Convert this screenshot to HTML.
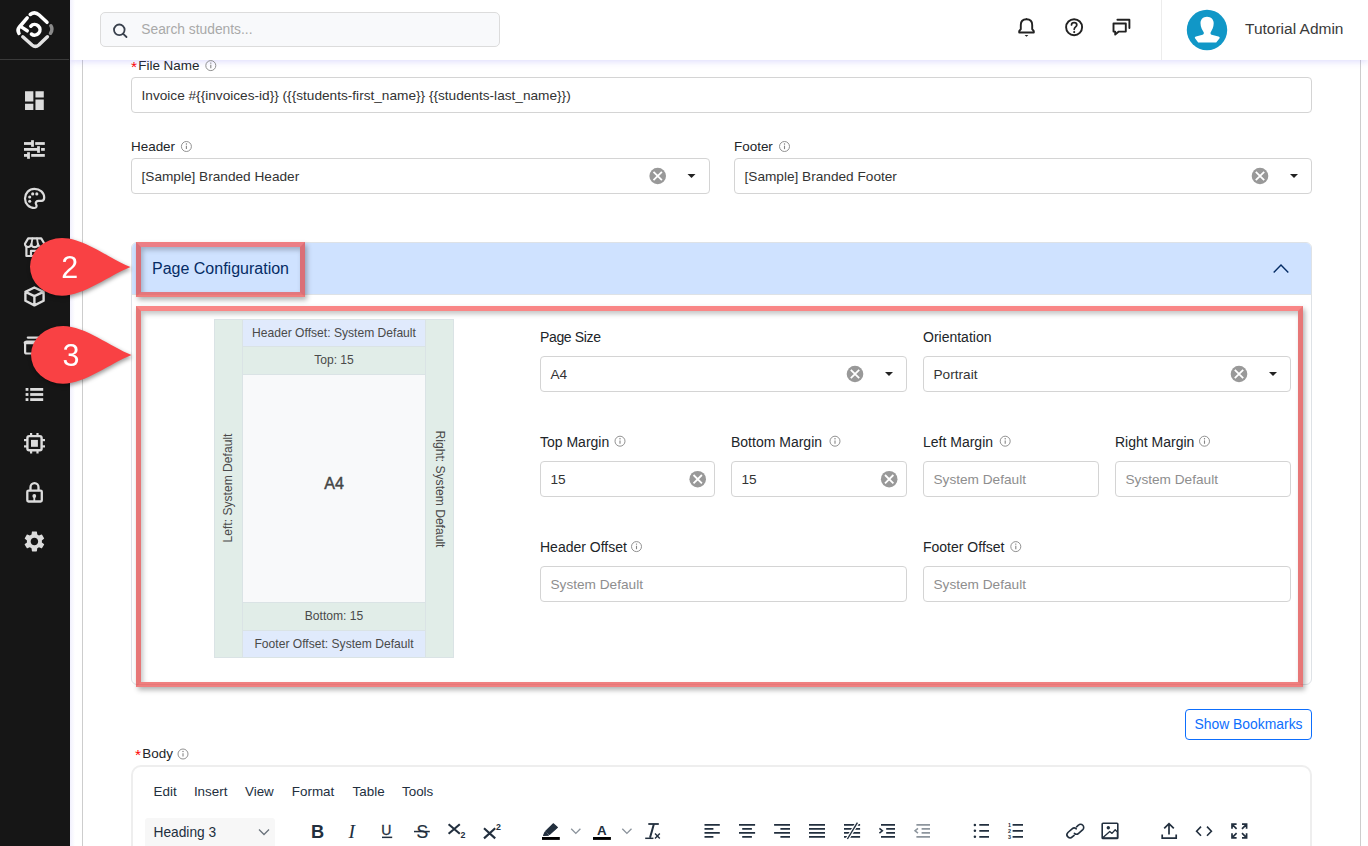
<!DOCTYPE html>
<html lang="en">
<head>
<meta charset="utf-8">
<title>Page Configuration</title>
<style>
*{box-sizing:border-box;margin:0;padding:0}
html,body{width:1368px;height:846px;overflow:hidden;background:#fff}
body{font-family:"Liberation Sans",sans-serif;color:#212529;position:relative;font-size:14px}
.abs{position:absolute}
/* sidebar */
#side{position:absolute;left:0;top:0;width:70px;height:846px;background:#161616;z-index:5}
#side .sep{position:absolute;left:0;top:59px;width:69px;height:1px;background:#3a3a3a}
#side svg.ic{position:absolute;left:21.5px;width:26px;height:26px;fill:#dcdcdc}
/* topbar */
#top{position:absolute;left:70px;top:0;width:1298px;height:60px;background:#fff;z-index:4;box-shadow:0 2px 6px rgba(120,110,240,.22)}
#search{position:absolute;left:30px;top:12px;width:400px;height:35px;background:#f8f9fb;border:1px solid #dcdcdc;border-radius:5px}
#search span{position:absolute;left:40.3px;top:9px;font-size:13.8px;color:#a9a9a9;white-space:nowrap}
#top .vsep{position:absolute;left:1091px;top:0;width:1px;height:60px;background:#ececec}
#uname{position:absolute;left:1175px;top:20px;font-size:15.5px;color:#3a3a3a;white-space:nowrap}
/* page */
#card{position:absolute;left:82px;top:-20px;width:1279px;height:900px;border:1px solid #cdcdcd;background:#fff;z-index:1}
#shade{position:absolute;left:70px;top:0;width:5px;height:846px;background:linear-gradient(90deg,rgba(120,110,240,.10),rgba(120,110,240,0));z-index:5}
.lbl{position:absolute;font-size:13.45px;color:#212529;white-space:nowrap;z-index:3;line-height:18px}
.lbl .req{color:#f00;margin-right:1.2px;font-size:15.5px;position:relative;top:1.5px;line-height:10px}
.inp{position:absolute;height:36px;border:1px solid #d4d4d4;border-radius:4px;background:#fff;z-index:3}
.inp span{position:absolute;left:9.5px;top:9.5px;font-size:13.65px;color:#333;white-space:nowrap;line-height:16px}
.inp span.ph{color:#8e8e8e}
.info{position:absolute;width:11px;height:11px;z-index:3}
.clr{position:absolute;width:17px;height:17px;z-index:4}
.caret{position:absolute;width:0;height:0;border-left:4px solid transparent;border-right:4px solid transparent;border-top:4px solid #222;z-index:4}
.lbl.r{font-size:14px}
#acc{position:absolute;left:131px;top:242px;width:1181px;height:443px;border:1px solid #dee2e6;border-radius:6px;background:#fff;z-index:2;overflow:hidden}
#acchead{position:absolute;left:-1px;top:-1px;width:1181px;height:53px;background:#cfe2ff;border-bottom:1px solid #dee2e6}
#acchead span{position:absolute;left:21px;top:17px;font-size:16px;color:#052c65;white-space:nowrap;line-height:20px}
#acchead .chev{position:absolute;left:1142px;top:22px}
#pv{position:absolute;left:214px;top:319px;width:240px;height:339px;background:#dae3e5;z-index:3;font-size:12.1px;color:#4a4a4a}
#pv .pvl,#pv .pvr{position:absolute;top:1px;width:27px;height:337px;background:#e1ede8}
#pv .pvl{left:1px}#pv .pvr{left:212px}
#pv .pvl span{position:absolute;left:13px;top:168px;white-space:nowrap;transform:translate(-50%,-50%) rotate(-90deg)}
#pv .pvr span{position:absolute;left:14px;top:168.500px;white-space:nowrap;transform:translate(-50%,-50%) rotate(90deg)}
#pv .pvrow{position:absolute;left:29px;width:182px;text-align:center;white-space:nowrap;display:flex;align-items:center;justify-content:center}
#pv .ho{background:#e0eafc}
#pv .tm{background:#e1ede8;padding-bottom:2px}
#pv .pvc{position:absolute;left:29px;top:56px;width:182px;height:227px;background:#f8f9fa}
#pv .pvc span{position:absolute;left:0;width:182px;text-align:center;top:99px;line-height:20px;font-size:16px;font-weight:normal;-webkit-text-stroke:0.45px #454545;color:#454545}
#bm{position:absolute;left:1185px;top:709px;width:127px;height:31px;border:1px solid #0d6efd;border-radius:4px;color:#0d6efd;font-size:13.9px;text-align:center;line-height:29px;z-index:3;background:#fff;white-space:nowrap}
#ed{position:absolute;left:131px;top:765px;width:1181px;height:120px;border:2px solid #eee;border-radius:10px;background:#fff;z-index:3}
#ed .menu span{position:absolute;top:15.5px;font-size:13.4px;color:#222f3e;white-space:nowrap;line-height:18px}
#hsel{position:absolute;left:12px;top:51px;width:130px;height:34px;background:#f7f7f7;border-radius:3px}
#hsel span{position:absolute;left:8.500px;top:5.500px;font-size:13.750px;color:#222f3e;white-space:nowrap;line-height:18px}
.hl{position:absolute;border:5px solid;border-color:rgba(247,88,88,.72) rgba(223,68,68,.72) rgba(234,79,79,.72) rgba(223,68,68,.72);box-shadow:2px 3px 5px rgba(0,0,0,.3), inset 2px 3px 5px rgba(0,0,0,.23);z-index:6}
.mk{position:absolute;z-index:7;filter:drop-shadow(1px 2px 2px rgba(0,0,0,.4));overflow:visible}
</style>
</head>
<body>
<div id="side">
  <div class="sep"></div>
  <svg class="abs" style="left:0;top:0" width="70" height="846" viewBox="0 0 70 846">
    <g fill="none" stroke-width="3.5" stroke-linecap="round" stroke-linejoin="round">
      <path d="M30.200 14.500 Q34.800 11 39.200 15 L47 22.300" stroke="#fff"/>
      <path d="M27.2 17.800 L19.4 27 Q16.800 30.200 19 33.400" stroke="#fff"/>
      <path d="M22 27.400 L27.2 30.800" stroke="#fff"/>
      <path d="M30.800 26.200 A5.300 5.300 0 1 1 31.400 34" stroke="#fff"/>
      <path d="M50.900 25.800 Q53.200 29.400 50.500 33.200" stroke="#8a8a8a"/>
      <path d="M22.800 36.800 L32 45 Q35.400 47.800 38.800 45 L47.400 36.800" stroke="#e2e2e2"/>
    </g>
    <g fill="#dcdcdc">
      <!-- dashboard -->
      <path transform="translate(21.9 88) scale(1.0417)" d="M3 13h8V3H3v10zm0 8h8v-6H3v6zm10 0h8V11h-8v10zm0-18v6h8V3h-8z"/>
      <!-- tune -->
      <rect x="24" y="142.100" width="9" height="2.800"/><rect x="31.100" y="140.200" width="2.800" height="6.600"/><rect x="35.200" y="142.100" width="9.600" height="2.800"/>
      <rect x="24" y="148" width="15" height="2.800"/><rect x="37.100" y="146.200" width="2.800" height="6.600"/><rect x="41.100" y="148" width="3.700" height="2.800"/>
      <rect x="24" y="154" width="5" height="2.800"/><rect x="27.100" y="152.200" width="2.800" height="6.600"/><rect x="31.200" y="154" width="13.600" height="2.800"/>
      <!-- palette dots -->
      <circle cx="32.700" cy="193.900" r="1.550"/><circle cx="36.800" cy="193.900" r="1.550"/><circle cx="29.700" cy="197" r="1.550"/><circle cx="29.700" cy="201.200" r="1.550"/>
      <!-- list -->
      <rect x="25.600" y="388" width="2.800" height="2.800"/><rect x="30.200" y="388" width="13" height="2.800"/>
      <rect x="25.600" y="393.100" width="2.800" height="2.800"/><rect x="30.200" y="393.100" width="13" height="2.800"/>
      <rect x="25.600" y="398.200" width="2.800" height="2.800"/><rect x="30.200" y="398.200" width="13" height="2.800"/>
      <!-- chip inner + pins -->
      <rect x="31" y="439.900" width="6.900" height="6.900"/>
      <rect x="30" y="433" width="2.200" height="3"/><rect x="36.400" y="433" width="2.200" height="3"/>
      <rect x="30" y="450.500" width="2.200" height="3"/><rect x="36.400" y="450.500" width="2.200" height="3"/>
      <rect x="24" y="439" width="3" height="2.200"/><rect x="24" y="445.300" width="3" height="2.200"/>
      <rect x="42" y="439" width="3" height="2.200"/><rect x="42" y="445.300" width="3" height="2.200"/>
      <!-- lock keyhole -->
      <circle cx="34.300" cy="496" r="1.900"/><rect x="33.400" y="496" width="1.800" height="5.500"/>
      <!-- gear -->
      <path transform="translate(21.900 528.900) scale(1.0417)" d="M19.140 12.940c.04-.3.060-.610.060-.940 0-.320-.020-.640-.070-.940l2.030-1.580a.49.49 0 0 0 .120-.610l-1.920-3.320a.488.488 0 0 0-.590-.220l-2.390.960c-.5-.380-1.030-.7-1.620-.940l-.36-2.540a.484.484 0 0 0-.480-.410h-3.840c-.240 0-.430.170-.470.410l-.36 2.540c-.590.240-1.130.570-1.620.940l-2.390-.960c-.220-.080-.470 0-.590.220L2.740 8.870c-.120.210-.080.470.120.610l2.030 1.580c-.05.3-.09.630-.09.940s.02.640.07.940l-2.030 1.580a.49.49 0 0 0-.120.610l1.920 3.320c.120.220.370.290.590.220l2.390-.960c.5.380 1.030.7 1.620.940l.36 2.540c.05.240.240.410.480.410h3.840c.240 0 .440-.170.470-.410l.36-2.540c.590-.240 1.130-.560 1.620-.940l2.390.960c.220.080.470 0 .590-.220l1.920-3.320c.120-.220.070-.470-.120-.610l-2.010-1.580zM12 15.600c-1.980 0-3.600-1.620-3.600-3.600s1.620-3.600 3.600-3.600 3.600 1.620 3.600 3.600-1.620 3.600-3.600 3.600z"/>
    </g>
    <g fill="none" stroke="#dcdcdc" stroke-width="2.200" stroke-linejoin="round" stroke-linecap="round">
      <!-- palette -->
      <path d="M34.400 188.800 C40 188.800 44.200 192.800 44.200 197.600 C44.200 199.800 43.200 200.900 41.400 200.900 L38.800 200.900 C36.400 200.900 35 202.600 36.100 204.400 C37.200 206.200 36.400 208 34.400 208 C29.200 208 25 203.700 25 198.400 C25 193.100 29.200 188.800 34.400 188.800 Z"/>
      <!-- store --><g transform="translate(0.2 0.5)">
      <path d="M28 237.900 L41 237.900 L44.200 243.300 A3.200 3 0 0 1 37.800 243.700 A3.300 3 0 0 1 31.200 243.700 A3.200 3 0 0 1 24.800 243.300 Z"/>
      <path d="M31.300 243.500 L32.200 238 M37.700 243.500 L36.800 238" stroke-width="1.800"/>
      <path d="M26.200 246.600 V255.500 H43 V246.600"/>
      <path d="M30.800 255.500 V250.400 H37.600 V255.500"/></g>
      <!-- cube -->
      <path stroke-width="2.400" d="M34.400 287.500 L43.600 291.900 V300.700 L34.400 305.400 L25.400 300.700 V291.900 Z M25.400 291.900 L34.400 296.200 L43.600 291.900 M34.400 296.200 V305.400"/>
      <!-- card -->
      <path d="M27.800 337.600 H42"/>
      <rect x="25.100" y="341.500" width="19" height="12" rx="1.500"/>
      <path d="M25.100 342.800 H44" stroke-width="3"/>
      <!-- chip -->
      <rect x="27.400" y="436.100" width="14.200" height="14.200" rx="1.800" stroke-width="2.400"/>
      <!-- lock -->
      <rect x="27.300" y="490.600" width="14.500" height="10.900" rx="1.200" stroke-width="2.300"/>
      <path d="M30.500 490 V487.200 A4 4 0 0 1 38.500 487.200 V490" stroke-width="2.300"/>
    </g>
  </svg>
</div>
<div id="top">
  <div id="search"><span>Search students...</span></div>
  <div class="vsep"></div>
  <svg class="abs" style="left:0;top:0" width="1298" height="60" viewBox="70 0 1298 60">
    <g fill="none" stroke="#39414d" stroke-width="1.800" stroke-linecap="round">
      <circle cx="119.300" cy="29.800" r="5.300"/><path d="M123.200 33.800 L126.500 37"/>
    </g>
    <g fill="none" stroke="#222" stroke-width="1.900" stroke-linejoin="round" stroke-linecap="round">
      <!-- bell -->
      <path d="M1019.200 32.500 H1033.800 V31.200 L1032.200 29.200 V25 C1032.200 21.400 1029.800 19.300 1026.500 19.300 C1023.200 19.300 1020.800 21.400 1020.800 25 V29.200 L1019.200 31.200 Z"/>
      <!-- help -->
      <circle cx="1074.100" cy="27.200" r="8"/>
      <path d="M1071.500 25 C1071.500 21.900 1076.800 21.900 1076.800 25 C1076.800 26.900 1074.200 27 1074.200 29.300" stroke-width="1.700"/>
      <!-- chat -->
      <path d="M1113.500 23.500 H1125.800 V31.600 H1118.800 L1115.200 34.600 V31.600 H1113.500 Z"/>
      <path d="M1117.400 19.700 H1129.400 V28"/>
    </g>
    <path d="M1024.600 35 H1028.400 L1026.500 36.700 Z M1025.700 18.900 L1026.500 18 L1027.300 18.900Z" fill="#222"/>
    <circle cx="1074.200" cy="32.100" r="1.050" fill="#222"/>
    <circle cx="1207" cy="30" r="20.200" fill="#1197c7"/>
    <path fill="#fff" d="M1207 16.800 C1203 16.800 1200.500 19.600 1200.500 23.200 C1200.500 27 1202.400 30 1203.800 32.400 C1204.200 33.800 1203 34.600 1201.600 35 L1196 36.400 C1195 36.800 1194.600 37.600 1195 38.200 L1198.200 42.600 L1216.200 42.600 L1219.600 38.200 C1220 37.400 1219.400 36.800 1218.400 36.400 L1212.600 35 C1211 34.600 1210.200 33.800 1210.600 32.400 C1212 30 1213.700 27 1213.700 23.200 C1213.700 19.600 1211 16.800 1207 16.800Z"/>
  </svg>
  <div id="uname">Tutorial Admin</div>
</div>
<div id="shade"></div>
<div id="card"></div>
<!-- top form -->
<div class="lbl" style="left:131px;top:57px"><span class="req">*</span>File Name</div>
<div class="inp" style="left:131px;top:77px;width:1181px"><span>Invoice #{{invoices-id}} ({{students-first_name}} {{students-last_name}})</span></div>
<div class="lbl" style="left:131px;top:138px">Header</div>
<div class="inp" style="left:131px;top:158px;width:579px"><span>[Sample] Branded Header</span></div>
<div class="lbl" style="left:734px;top:138px">Footer</div>
<div class="inp" style="left:734px;top:158px;width:578px"><span>[Sample] Branded Footer</span></div>

<!-- accordion -->
<div id="acc">
  <div id="acchead"><span>Page Configuration</span>
    <svg class="chev" viewBox="0 0 16 9" width="16" height="9"><path d="M0.7 8.5 L8 1 L15.3 8.5" fill="none" stroke="#052c65" stroke-width="1.4"/></svg>
  </div>
</div>

<!-- preview -->
<div id="pv">
  <div class="pvl"><span>Left: System Default</span></div>
  <div class="pvr"><span>Right: System Default</span></div>
  <div class="pvrow ho" style="top:1px;height:26px">Header Offset: System Default</div>
  <div class="pvrow tm" style="top:28px;height:27px">Top: 15</div>
  <div class="pvc"><span>A4</span></div>
  <div class="pvrow tm" style="top:284px;height:27px">Bottom: 15</div>
  <div class="pvrow ho" style="top:312px;height:26px">Footer Offset: System Default</div>
</div>

<!-- config form -->
<div class="lbl r" style="left:540px;top:328px;letter-spacing:-0.35px">Page Size</div>
<div class="inp" style="left:540px;top:356px;width:367px"><span>A4</span></div>
<div class="lbl r" style="left:923px;top:328px">Orientation</div>
<div class="inp" style="left:923px;top:356px;width:368px"><span>Portrait</span></div>

<div class="lbl r" style="left:540px;top:433px">Top Margin</div>
<div class="inp" style="left:540px;top:461px;width:175px"><span>15</span></div>
<div class="lbl r" style="left:731px;top:433px">Bottom Margin</div>
<div class="inp" style="left:731px;top:461px;width:176px"><span>15</span></div>
<div class="lbl r" style="left:923px;top:433px">Left Margin</div>
<div class="inp" style="left:923px;top:461px;width:176px"><span class="ph">System Default</span></div>
<div class="lbl r" style="left:1115px;top:433px">Right Margin</div>
<div class="inp" style="left:1115px;top:461px;width:176px"><span class="ph">System Default</span></div>

<div class="lbl r" style="left:540px;top:538px">Header Offset</div>
<div class="inp" style="left:540px;top:566px;width:367px"><span class="ph">System Default</span></div>
<div class="lbl r" style="left:923px;top:538px">Footer Offset</div>
<div class="inp" style="left:923px;top:566px;width:368px"><span class="ph">System Default</span></div>

<!-- bookmarks + body -->
<div id="bm">Show Bookmarks</div>
<div class="lbl" style="left:135px;top:745px"><span class="req">*</span>Body</div>
<div id="ed">
  <div class="menu">
    <span style="left:20.600px">Edit</span><span style="left:60.900px">Insert</span><span style="left:112px">View</span><span style="left:158.800px">Format</span><span style="left:219.600px">Table</span><span style="left:269px">Tools</span>
  </div>
  <div id="hsel"><span>Heading 3</span>
    <svg viewBox="0 0 12 8" width="12" height="8" style="position:absolute;left:112.500px;top:10px"><path d="M1 1.5 L6 6.5 L11 1.5" fill="none" stroke="#6b737c" stroke-width="1.3"/></svg>
  </div>
</div>

<!-- highlights -->
<div class="hl" style="left:136px;top:242px;width:169px;height:55px"></div>
<div class="hl" style="left:136px;top:306px;width:1167px;height:381px"></div>
<svg class="mk" style="left:20px;top:227px" width="130" height="80" viewBox="20 227 130 80"><path d="M130.500 267 C110 259 84 238 62 238 A32 28.850 0 0 0 62 295.700 C84 295.700 110 275 130.500 267Z" fill="#f94144"/><text x="69.800" y="278.200" text-anchor="middle" font-size="30.500" fill="#fff" font-family="Liberation Sans, sans-serif">2</text></svg>
<svg class="mk" style="left:21px;top:315px" width="130" height="80" viewBox="20 227 130 80"><path d="M130.500 267 C110 259 84 238 62 238 A32 28.850 0 0 0 62 295.700 C84 295.700 110 275 130.500 267Z" fill="#f94144"/><text x="69.900" y="277.600" text-anchor="middle" font-size="30.500" fill="#fff" font-family="Liberation Sans, sans-serif">3</text></svg>

<svg class="abs" style="left:0;top:0;z-index:4" width="1368" height="846" viewBox="0 0 1368 846">
<g fill="none" stroke="#858585" stroke-width="0.9">
<circle cx="210.8" cy="65.6" r="5"/><path d="M210.8 64.8 V68.19999999999999" stroke-width="1.1"/>
<circle cx="186.4" cy="146.5" r="5"/><path d="M186.4 145.7 V149.1" stroke-width="1.1"/>
<circle cx="784.5" cy="146.5" r="5"/><path d="M784.5 145.7 V149.1" stroke-width="1.1"/>
<circle cx="620" cy="441.2" r="5"/><path d="M620 440.4 V443.8" stroke-width="1.1"/>
<circle cx="835" cy="441.2" r="5"/><path d="M835 440.4 V443.8" stroke-width="1.1"/>
<circle cx="636.5" cy="546.6" r="5"/><path d="M636.5 545.8000000000001 V549.2" stroke-width="1.1"/>
<circle cx="1005.2" cy="441.2" r="5"/><path d="M1005.2 440.4 V443.8" stroke-width="1.1"/>
<circle cx="1204.5" cy="441.2" r="5"/><path d="M1204.5 440.4 V443.8" stroke-width="1.1"/>
<circle cx="1015.8" cy="546.6" r="5"/><path d="M1015.8 545.8000000000001 V549.2" stroke-width="1.1"/>
<circle cx="183" cy="754" r="5"/><path d="M183 753.2 V756.6" stroke-width="1.1"/>
</g><g fill="#7d7d7d">
<circle cx="210.8" cy="63.099999999999994" r="0.7"/>
<circle cx="186.4" cy="144.0" r="0.7"/>
<circle cx="784.5" cy="144.0" r="0.7"/>
<circle cx="620" cy="438.7" r="0.7"/>
<circle cx="835" cy="438.7" r="0.7"/>
<circle cx="636.5" cy="544.1" r="0.7"/>
<circle cx="1005.2" cy="438.7" r="0.7"/>
<circle cx="1204.5" cy="438.7" r="0.7"/>
<circle cx="1015.8" cy="544.1" r="0.7"/>
<circle cx="183" cy="751.5" r="0.7"/>
</g><g fill="#999">
<circle cx="657.7" cy="176" r="8.3"/>
<circle cx="1260" cy="176" r="8.3"/>
<circle cx="855" cy="374" r="8.3"/>
<circle cx="1239" cy="374" r="8.3"/>
<circle cx="697.7" cy="479.2" r="8.3"/>
<circle cx="889.2" cy="479.2" r="8.3"/>
</g><g stroke="#fff" stroke-width="1.8" fill="none">
<path d="M653.5 171.8 L661.9000000000001 180.2 M661.9000000000001 171.8 L653.5 180.2"/>
<path d="M1255.8 171.8 L1264.2 180.2 M1264.2 171.8 L1255.8 180.2"/>
<path d="M850.8 369.8 L859.2 378.2 M859.2 369.8 L850.8 378.2"/>
<path d="M1234.8 369.8 L1243.2 378.2 M1243.2 369.8 L1234.8 378.2"/>
<path d="M693.5 475.0 L701.9000000000001 483.4 M701.9000000000001 475.0 L693.5 483.4"/>
<path d="M885.0 475.0 L893.4000000000001 483.4 M893.4000000000001 475.0 L885.0 483.4"/>
</g><g fill="#222">
<path d="M687.5 174 H695.5 L691.5 178 Z"/>
<path d="M1290 174 H1298 L1294 178 Z"/>
<path d="M885 372 H893 L889 376 Z"/>
<path d="M1269 372 H1277 L1273 376 Z"/>
</g></svg>
<svg class="abs" style="left:0;top:800px;z-index:4" width="1368" height="46" viewBox="0 800 1368 46" font-family="Liberation Sans, sans-serif">
<text x="311" y="837.8" font-size="18.2" font-weight="bold" fill="#222f3e">B</text>
<text x="348.600" y="837.8" style="font-family:'Liberation Serif',serif;font-style:italic;font-size:19.5px" fill="#222f3e">I</text>
<text x="381.2" y="834.6" font-size="14" fill="#222f3e" stroke="#222f3e" stroke-width="0.3">U</text><rect x="382" y="836.6" width="10.200" height="1.500" fill="#222f3e"/>
<text x="416.4" y="838" font-size="17.5" fill="#222f3e" stroke="#222f3e" stroke-width="0.2">S</text><rect x="414" y="830.8" width="15.800" height="1.500" fill="#222f3e"/>
<g stroke="#222f3e" stroke-width="2.100" fill="none"><path d="M448.600 824.200 L459.800 833.800 M459.800 824.200 L448.600 833.800"/><path d="M484 828.200 L495.200 838.400 M495.200 828.200 L484 838.400"/></g>
<text x="460.400" y="837.800" font-size="8.800" font-weight="bold" fill="#222f3e">2</text>
<text x="496" y="830.200" font-size="8.800" font-weight="bold" fill="#222f3e">2</text>
<path d="M553.200 823.800 L557.400 827.400 L549.600 834.400 L545.800 831.200 Z M545 832.200 L548.400 835.200 L543.600 835.400 Z" fill="#222f3e" stroke="#222f3e" stroke-width="1.200" stroke-linejoin="round"/>
<rect x="542" y="837" width="17.800" height="2.900" fill="#000"/>
<path d="M571.200 828.800 L575.800 833.400 L580.400 828.800" fill="none" stroke="#8a929b" stroke-width="1.300"/>
<text x="597" y="834.500" font-size="13.400" font-weight="bold" fill="#222f3e">A</text>
<rect x="593" y="837" width="17.900" height="2.900" fill="#000"/>
<path d="M622.300 828.800 L626.900 833.400 L631.500 828.800" fill="none" stroke="#8a929b" stroke-width="1.300"/>
<g stroke="#222f3e" fill="none"><path d="M648.300 824 H658.800" stroke-width="1.800"/><path d="M653.900 824 L650 837.800" stroke-width="2"/><path d="M645.200 838.300 H653.400" stroke-width="1.500"/><path d="M655 833.600 L659.800 838.400 M659.800 833.600 L655 838.400" stroke-width="1.400"/></g>
<path d="M704.5 824.8 H719.8 M704.5 828.8 H713.4 M704.5 832.8 H719.8 M704.5 836.9 H713.4 " stroke="#222f3e" stroke-width="1.800" fill="none"/>
<path d="M739 824.8 H755.1 M742.2 828.8 H751.9 M739 832.8 H755.1 M742.2 836.9 H751.9 " stroke="#222f3e" stroke-width="1.800" fill="none"/>
<path d="M774.1 824.8 H790 M780.4 828.8 H790 M774.1 832.8 H790 M780.4 836.9 H790 " stroke="#222f3e" stroke-width="1.800" fill="none"/>
<path d="M809 824.8 H825 M809 828.8 H825 M809 832.8 H825 M809 836.9 H825 " stroke="#222f3e" stroke-width="1.800" fill="none"/>
<path d="M844 824.8 H860.1 M844 828.8 H860.1 M844 832.8 H860.1 M844 836.9 H860.1 " stroke="#222f3e" stroke-width="1.800" fill="none"/>
<path d="M857.400 822.700 L847.400 839" stroke="#fff" stroke-width="3.600"/><path d="M857.400 822.700 L847.400 839" stroke="#222f3e" stroke-width="1.400"/>
<path d="M881 824.8 H895 M886.2 828.8 H895 M886.2 832.8 H895 M881 836.9 H895 " stroke="#222f3e" stroke-width="1.800" fill="none"/>
<path d="M879.400 828.400 L882.400 830.800 L879.400 833.200" fill="none" stroke="#222f3e" stroke-width="1.500"/>
<path d="M916.4 824.8 H930 M921.6 828.8 H930 M921.6 832.8 H930 M916.4 836.9 H930 " stroke="#8d959d" stroke-width="1.800" fill="none"/>
<path d="M918 828.400 L915 830.800 L918 833.200" fill="none" stroke="#8d959d" stroke-width="1.500"/>
<path d="M979.3 824.9 H989 M979.3 830.8 H989 M979.3 836.8 H989 " stroke="#222f3e" stroke-width="1.800" fill="none"/>
<circle cx="974.900" cy="824.9" r="1.250" fill="#222f3e"/>
<circle cx="974.900" cy="830.8" r="1.250" fill="#222f3e"/>
<circle cx="974.900" cy="836.8" r="1.250" fill="#222f3e"/>
<path d="M1012.6 824.9 H1023 M1012.6 830.8 H1023 M1012.6 836.8 H1023 " stroke="#222f3e" stroke-width="1.800" fill="none"/>
<text x="1008" y="826.8" font-size="5.400" font-weight="bold" fill="#222f3e">1</text>
<text x="1008" y="832.6999999999999" font-size="5.400" font-weight="bold" fill="#222f3e">2</text>
<text x="1008" y="838.6999999999999" font-size="5.400" font-weight="bold" fill="#222f3e">3</text>
<g fill="none" stroke="#222f3e" stroke-width="1.600" stroke-linecap="round"><path d="M1076.600 826.800 L1078.400 825.200 A3.100 3.100 0 0 1 1082.800 829.600 L1078.600 833.300 A3.100 3.100 0 0 1 1074.400 833.300"/><path d="M1074.100 835.300 L1072.300 836.900 A3.100 3.100 0 0 1 1067.900 832.500 L1072.100 828.800 A3.100 3.100 0 0 1 1076.300 828.800"/></g>
<rect x="1102.200" y="823.300" width="15.600" height="15.200" rx="0.800" fill="none" stroke="#222f3e" stroke-width="1.600"/><circle cx="1108.300" cy="827.700" r="1.700" fill="#222f3e"/><path d="M1103 837.600 L1109.800 831.400 L1112 833.400 L1115.200 829.800 L1117.400 832 V837.800 Z" fill="none" stroke="#222f3e" stroke-width="1.300" stroke-linejoin="round"/>
<g fill="none" stroke="#222f3e" stroke-width="1.700"><path d="M1169 834.400 V823.600 M1164.200 828.400 L1169 823.600 L1173.800 828.400"/><path d="M1162.200 834.600 V838.200 H1176.200 V834.600"/></g>
<path d="M1201 826.600 L1196.600 831.200 L1201 835.800 M1207 826.600 L1211.400 831.200 L1207 835.800" fill="none" stroke="#222f3e" stroke-width="1.600"/>
<path d="M1236.6 824.2 H1232.0 V828.8 M1232.4 824.6 L1236.6 828.8 M1242.0 824.2 H1246.6 V828.8 M1246.2 824.6 L1242.0 828.8 M1236.6 837.8 H1232.0 V833.2 M1232.4 837.4 L1236.6 833.2 M1242.0 837.8 H1246.6 V833.2 M1246.2 837.4 L1242.0 833.2" fill="none" stroke="#222f3e" stroke-width="1.700"/>
</svg>
<!--CONTENT4-->
</body>
</html>
